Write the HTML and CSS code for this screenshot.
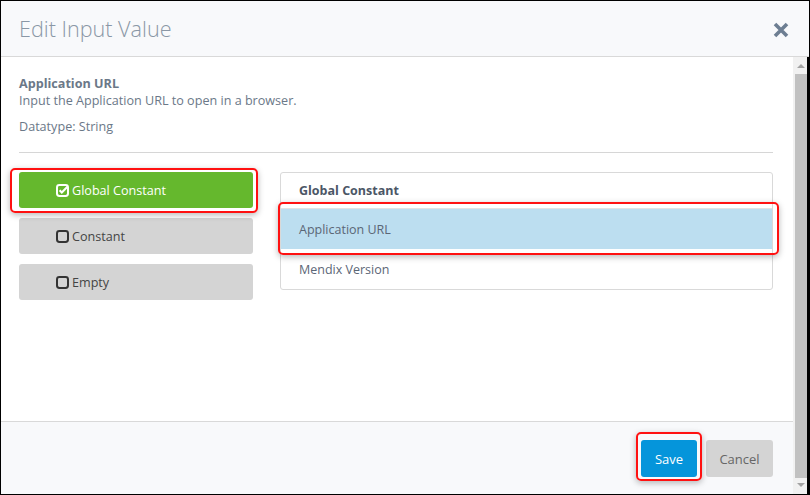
FILE: index.html
```html
<!DOCTYPE html>
<html>
<head>
<meta charset="utf-8">
<link rel="stylesheet" href="styles.css">
</head>
<body>
<div class="dialog">
  <div class="header">
    <h1 class="title">Edit Input Value</h1>
    <svg class="close" width="16" height="16" viewBox="0 0 16 16"><path d="M2 2L14 14M14 2L2 14" stroke="#6d7e92" stroke-width="3.6" stroke-linecap="butt"/></svg>
  </div>
  <div class="main">
    <div class="scrollarea">
      <div class="body">
        <div class="info">
          <div class="name">Application URL</div>
          <div class="desc">Input the Application URL to open in a browser.</div>
          <div class="dtype">Datatype: String</div>
        </div>
        <div class="rule"></div>
        <div class="cols">
          <div class="choices">
            <div class="choice active mark mark-gc">
              <svg class="ico" width="13" height="13" viewBox="0 0 13 13"><rect x="1" y="1" width="11" height="11" rx="2.4" fill="none" stroke="#fff" stroke-width="2"/><path d="M3.6 6.3L5.8 8.5L11.4 2.8" fill="none" stroke="#fff" stroke-width="2.1"/></svg>
              <span>Global Constant</span>
            </div>
            <div class="choice">
              <svg class="ico" width="13" height="13" viewBox="0 0 13 13"><rect x="1" y="1" width="11" height="11" rx="2.4" fill="none" stroke="#333" stroke-width="2"/></svg>
              <span>Constant</span>
            </div>
            <div class="choice">
              <svg class="ico" width="13" height="13" viewBox="0 0 13 13"><rect x="1" y="1" width="11" height="11" rx="2.4" fill="none" stroke="#333" stroke-width="2"/></svg>
              <span>Empty</span>
            </div>
          </div>
          <div class="panel">
            <div class="panel-head">Global Constant</div>
            <div class="row selected mark mark-row">Application URL</div>
            <div class="row">Mendix Version</div>
          </div>
        </div>
      </div>
      <div class="footer">
        <div class="btn save mark mark-save">Save</div>
        <div class="btn cancel">Cancel</div>
      </div>
    </div>
    <div class="scrollbar">
      <div class="arrow up"></div>
      <div class="thumb"></div>
      <div class="arrow down"></div>
    </div>
  </div>
</div>
</body>
</html>
```
FILE: styles.css
```css
* { box-sizing: border-box; }
html, body { margin: 0; padding: 0; background: #fff; }
body { font-family: "Open Sans", "Noto Sans", sans-serif; }

.dialog {
  width: 810px;
  height: 495px;
  border: 1px solid #000;
  display: flex;
  flex-direction: column;
  overflow: hidden;
}

.header {
  height: 56px;
  flex: none;
  background: #f8f9fb;
  border-bottom: 1px solid #d9d9d9;
  display: flex;
  align-items: center;
  justify-content: space-between;
  padding: 0 20px 1px 18px;
}
.title {
  margin: 0;
  font-weight: 300;
  font-size: 21.6px;
  color: #8a97a6;
}
.close { margin-top: 3px; }

.main {
  flex: 1;
  display: flex;
  min-height: 0;
}
.scrollarea {
  flex: 1;
  display: flex;
  flex-direction: column;
}
.body {
  flex: 1;
  background: #fff;
  padding: 18px 20px 0 18px;
}
.info { color: #6b7888; font-size: 12.6px; line-height: 17px; }
.name { font-weight: 700; }
.dtype { margin-top: 9px; }
.rule {
  height: 1px;
  background: #d6d6d6;
  margin: 17px 0 19px 0;
}

.cols {
  display: flex;
  gap: 27px;
}
.choices {
  width: 234px;
  display: flex;
  flex-direction: column;
  gap: 10px;
}
.choice {
  height: 36px;
  border-radius: 3px;
  background: #d4d4d4;
  color: #444;
  font-size: 12.6px;
  display: flex;
  align-items: center;
  gap: 3px;
  padding-left: 37px;
}
.choice .ico { flex: none; margin-top: 1px; }
.choice.active { background: #65b82d; color: #fff; }

.panel {
  flex: 1;
  height: 118px;
  border: 1px solid #d9d9d9;
  border-radius: 3px;
}
.panel-head {
  height: 36px;
  padding-left: 18px;
  display: flex;
  align-items: center;
  font-size: 12.5px;
  font-weight: 700;
  color: #4b5666;
  border-bottom: 1px solid #e2e2e2;
}
.row {
  height: 40px;
  padding-left: 18px;
  display: flex;
  align-items: center;
  font-size: 12.5px;
  color: #5b6676;
}
.row.selected { background: #bcdef0; }

.footer {
  height: 73px;
  flex: none;
  background: #f8f9fb;
  border-top: 1px solid #d9d9d9;
  display: flex;
  justify-content: flex-end;
  align-items: flex-start;
  gap: 9px;
  padding: 18px 20px 0 0;
}
.btn {
  height: 37px;
  border-radius: 3px;
  display: flex;
  align-items: center;
  justify-content: center;
  font-size: 13px;
}
.save { width: 56px; background: #0595db; color: #fff; }
.cancel { width: 67px; background: #d4d4d4; color: #666; }

.scrollbar {
  width: 16px;
  flex: none;
  background: #f1f1f1;
  border-right: 2px solid #000;
  display: flex;
  flex-direction: column;
  align-items: center;
  padding: 0 0 0 1px;
}
.arrow { width: 0; height: 0; border-left: 4px solid transparent; border-right: 4px solid transparent; flex: none; }
.arrow.up { border-bottom: 4px solid #a3a3a3; margin: 7px 0 6px; }
.arrow.down { border-top: 4px solid #a3a3a3; margin: 5px 0 7px; }
.thumb { flex: 1; width: 12px; background: #c1c1c1; }

/* red annotation highlights drawn over the content */
.mark { position: relative; }
.mark::after {
  content: "";
  position: absolute;
  border: 2px solid #ff1111;
  border-radius: 5px;
  box-shadow: 0 2px 6px rgba(0,0,0,0.28);
  pointer-events: none;
}
.mark-gc::after { left: -9px; right: -5px; top: -4px; bottom: -5px; }
.mark-row::after { left: -3px; right: -7px; top: -7px; bottom: -6px; }
.mark-save::after { left: -5px; right: -5px; top: -8px; bottom: -4px; }
```
